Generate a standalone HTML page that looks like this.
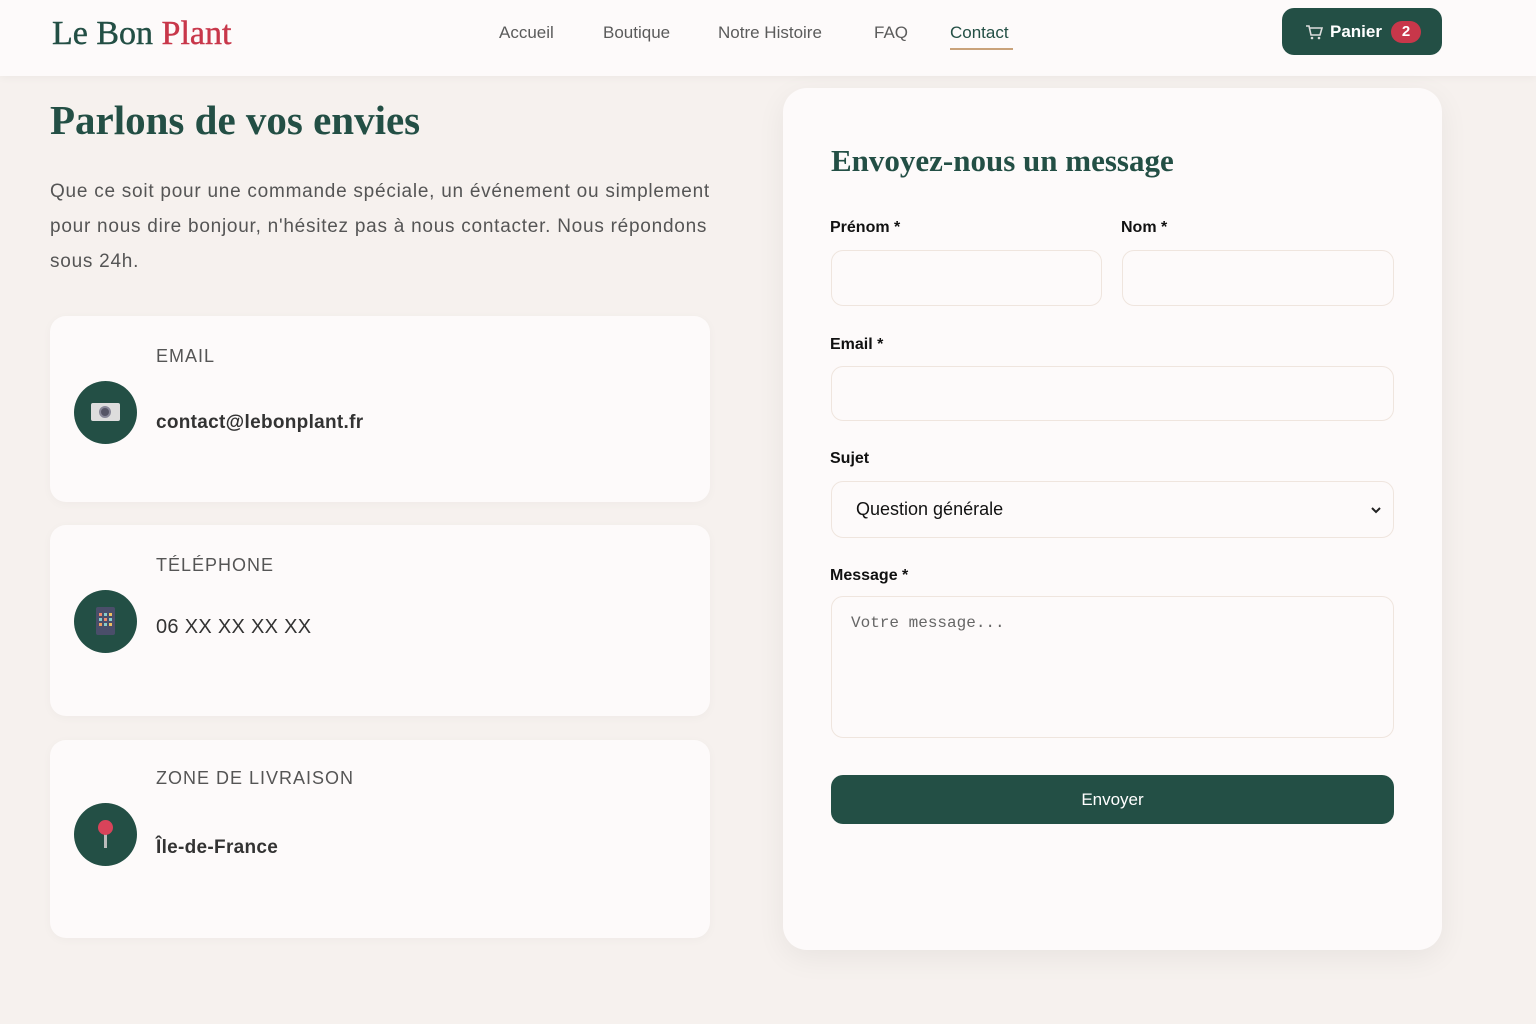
<!DOCTYPE html>
<html><head><meta charset="utf-8"><style>
*{box-sizing:border-box;margin:0;padding:0}
body{width:1536px;height:1024px;background:#f6f1ee;font-family:"Liberation Sans",sans-serif;position:relative;overflow:hidden;color:#333}
.abs{position:absolute}
header{position:absolute;left:0;top:0;width:1536px;height:76px;background:#fdfafa;box-shadow:0 2px 8px rgba(0,0,0,0.04)}
.logo{left:52px;top:15px;font-family:"Liberation Serif",serif;font-size:34px;color:#234f45;white-space:nowrap;-webkit-text-stroke:0.4px currentColor}
.logo span{color:#c8374a}
.nav{top:23px;font-size:17px;color:#5b5b5b;white-space:nowrap}
.panier{left:1282px;top:8px;width:160px;height:47px;background:#234f45;border-radius:12px;color:#fff;font-weight:bold;font-size:17px}
.badge{position:absolute;left:109px;top:12px;width:30px;height:22px;border-radius:11px;background:#c8374a;color:#fff;font-size:15px;text-align:center;line-height:22px}
h1{position:absolute;left:50px;top:96px;font-family:"Liberation Serif",serif;font-size:41px;color:#234f45;font-weight:bold;white-space:nowrap}
.intro{left:50px;top:174px;width:672px;font-size:19px;line-height:35px;color:#555;letter-spacing:0.75px}
.card{position:absolute;left:50px;width:660px;background:#fdfafa;border-radius:16px;box-shadow:0 2px 10px rgba(0,0,0,0.03)}
.circ{position:absolute;left:24px;width:63px;height:63px;border-radius:50%;background:#234f45}
.lab{position:absolute;left:106px;font-size:18px;letter-spacing:1px;color:#555}
.val{position:absolute;left:106px;font-size:19px;color:#333;font-weight:bold;letter-spacing:0.3px}
.form{left:783px;top:88px;width:659px;height:862px;background:#fdfafa;border-radius:24px;box-shadow:0 8px 30px rgba(0,0,0,0.06)}
.ft{left:48px;top:55px;font-family:"Liberation Serif",serif;font-size:31px;font-weight:bold;color:#234f45;white-space:nowrap}
.fl{position:absolute;font-size:16px;font-weight:bold;color:#111}
.in{position:absolute;border:1.5px solid #efe5de;border-radius:12px;background:#fdfafa}
.btn{left:48px;top:687px;width:563px;height:49px;background:#234f45;border-radius:12px;color:#fff;font-size:17px;text-align:center;line-height:49px}
</style></head><body>
<header>
<div class="abs logo">Le Bon <span>Plant</span></div>
<div class="abs nav" style="left:499px">Accueil</div>
<div class="abs nav" style="left:603px">Boutique</div>
<div class="abs nav" style="left:718px">Notre Histoire</div>
<div class="abs nav" style="left:874px">FAQ</div>
<div class="abs nav" style="left:950px;color:#234f45">Contact</div>
<div class="abs" style="left:950px;top:48px;width:63px;height:2px;background:#c9a27a"></div>
<div class="abs panier">
<svg class="abs" style="left:23px;top:16px" width="18" height="16" viewBox="0 0 18 16"><path d="M1 2h3l2 9h9l2-7H5" fill="none" stroke="#ddd" stroke-width="1.6"/><circle cx="7" cy="14" r="1.3" fill="#ddd"/><circle cx="14" cy="14" r="1.3" fill="#ddd"/></svg>
<div class="abs" style="left:48px;top:14px">Panier</div>
<div class="badge" style="top:13px">2</div>
</div>
</header>
<h1>Parlons de vos envies</h1>
<div class="abs intro">Que ce soit pour une commande spéciale, un événement ou simplement pour nous dire bonjour, n'hésitez pas à nous contacter. Nous répondons sous 24h.</div>

<div class="card" style="top:316px;height:186px">
<div class="lab" style="top:30px">EMAIL</div>
<div class="circ" style="top:65px"><div class="abs" style="left:17px;top:22px;width:29px;height:18px;background:#ddd;border-radius:2px"></div><div class="abs" style="left:25px;top:25px;width:12px;height:12px;border-radius:50%;background:#556;border:2px solid #889"></div></div>
<div class="val" style="top:96px">contact@lebonplant.fr</div>
</div>
<div class="card" style="top:525px;height:191px">
<div class="lab" style="top:30px">TÉLÉPHONE</div>
<div class="circ" style="top:65px"><div class="abs" style="left:22px;top:17px;width:19px;height:28px;background:#4a4e6a;border-radius:2px"></div>
<svg class="abs" style="left:24px;top:22px" width="15" height="15"><g><rect x="1" y="1" width="3" height="3" fill="#f08a6b"/><rect x="6" y="1" width="3" height="3" fill="#8cc"/><rect x="11" y="1" width="3" height="3" fill="#f0c060"/><rect x="1" y="6" width="3" height="3" fill="#8cc"/><rect x="6" y="6" width="3" height="3" fill="#f08a6b"/><rect x="11" y="6" width="3" height="3" fill="#8cc"/><rect x="1" y="11" width="3" height="3" fill="#f0a060"/><rect x="6" y="11" width="3" height="3" fill="#8cc"/><rect x="11" y="11" width="3" height="3" fill="#f0c060"/></g></svg></div>
<div class="val" style="top:91px;font-weight:normal;font-size:20px">06 XX XX XX XX</div>
</div>
<div class="card" style="top:740px;height:198px">
<div class="lab" style="top:28px">ZONE DE LIVRAISON</div>
<div class="circ" style="top:63px"><div class="abs" style="left:30px;top:25px;width:3px;height:20px;background:#bbb"></div><div class="abs" style="left:24px;top:17px;width:15px;height:15px;border-radius:50%;background:#d9435a"></div></div>
<div class="val" style="top:97px">Île-de-France</div>
</div>

<div class="abs form">
<div class="abs ft">Envoyez-nous un message</div>
<div class="fl" style="left:47px;top:131px">Prénom *</div>
<div class="fl" style="left:338px;top:131px">Nom *</div>
<div class="in" style="left:48px;top:162px;width:271px;height:56px"></div>
<div class="in" style="left:339px;top:162px;width:272px;height:56px"></div>
<div class="fl" style="left:47px;top:248px">Email *</div>
<div class="in" style="left:48px;top:278px;width:563px;height:55px"></div>
<div class="fl" style="left:47px;top:362px">Sujet</div>
<div class="in" style="left:48px;top:393px;width:563px;height:57px"><div class="abs" style="left:24px;top:17px;font-size:18px;color:#111">Question générale</div>
<svg class="abs" style="left:538px;top:23px" width="12" height="10"><path d="M2 3l4 4 4-4" fill="none" stroke="#222" stroke-width="2"/></svg></div>
<div class="fl" style="left:47px;top:479px">Message *</div>
<div class="in" style="left:48px;top:508px;width:563px;height:142px"><div class="abs" style="left:19px;top:17px;font-family:'Liberation Mono',monospace;font-size:16px;color:#666">Votre message...</div></div>
<div class="abs btn">Envoyer</div>
</div>
</body></html>
